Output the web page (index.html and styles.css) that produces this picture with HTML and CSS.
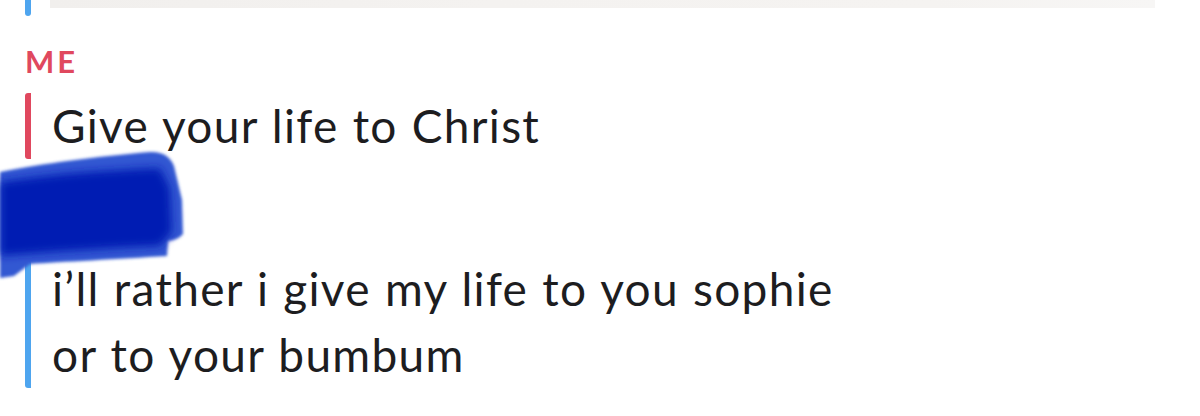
FILE: index.html
```html
<!DOCTYPE html>
<html>
<head>
<meta charset="utf-8">
<link rel="stylesheet" href="styles.css">
</head>
<body>
<div class="chat">
  <div class="prev">
    <div class="prev-bar"></div>
    <div class="prev-media"></div>
  </div>
  <div class="sender me">ME</div>
  <div class="msg msg-me">
    <p class="line">Give your life to Christ</p>
  </div>
  <div class="msg msg-them">
    <p class="line">i’ll rather i give my life to you sophie</p>
    <p class="line">or to your bumbum</p>
  </div>
</div>
<svg class="scribble" width="200" height="140" viewBox="0 0 200 140" aria-hidden="true">
  <defs>
    <filter id="soft" x="-10%" y="-10%" width="120%" height="120%">
      <feGaussianBlur stdDeviation="1.6"/>
    </filter>
    <filter id="soft2" x="-10%" y="-10%" width="120%" height="120%">
      <feGaussianBlur stdDeviation="4"/>
    </filter>
  </defs>
  <g filter="url(#soft)">
    <path d="M0,24 C40,16 100,8 150,4 Q168,3 174,18 L182,52 L183,86 Q178,92 168,93 L167,108 C120,111 60,114 30,116 L14,128 L0,130 Z" fill="#3159d2"/>
  </g>
  <g filter="url(#soft2)">
    <path d="M0,34 C50,26 110,22 160,20 L170,40 L172,84 L160,98 C110,100 50,104 0,108 Z" fill="#061bb3"/>
  </g>
</svg>
</body>
</html>
```
FILE: styles.css
```css
html, body {
  margin: 0;
  padding: 0;
  background: #ffffff;
}
body {
  width: 1200px;
  height: 416px;
  overflow: hidden;
  position: relative;
  font-family: "Lato", "Noto Sans", sans-serif;
  color: #1d1d1f;
}
.chat {
  display: flex;
  flex-direction: column;
  padding-left: 25px;
}
.prev {
  display: flex;
  align-items: flex-start;
  gap: 19px;
  height: 16px;
}
.prev-bar {
  width: 6px;
  height: 16px;
  background: #4ea5ef;
  border-radius: 0 0 3px 3px;
}
.prev-media {
  width: 1105px;
  height: 8px;
  background: linear-gradient(90deg, #f1efed, #f4f2f0 40%, #f5f3f1 80%, #f7f6f5);
}
.sender {
  margin-top: 25px;
  height: 40px;
  line-height: 40px;
  font-size: 31px;
  font-weight: 700;
  letter-spacing: 3px;
}
.me {
  color: #e0485e;
}
.msg {
  margin-top: 12px;
  border-left: 6px solid;
  border-radius: 3px;
  padding-left: 21px;
}
.msg-me {
  border-color: #e0485e;
}
.msg-them {
  margin-top: 97px;
  border-color: #4ea5ef;
}
.line {
  margin: 0;
  font-size: 46px;
  letter-spacing: 1.3px;
  word-spacing: 1px;
  line-height: 66px;
  white-space: nowrap;
}
.scribble {
  position: absolute;
  left: 0;
  top: 148px;
}
```
